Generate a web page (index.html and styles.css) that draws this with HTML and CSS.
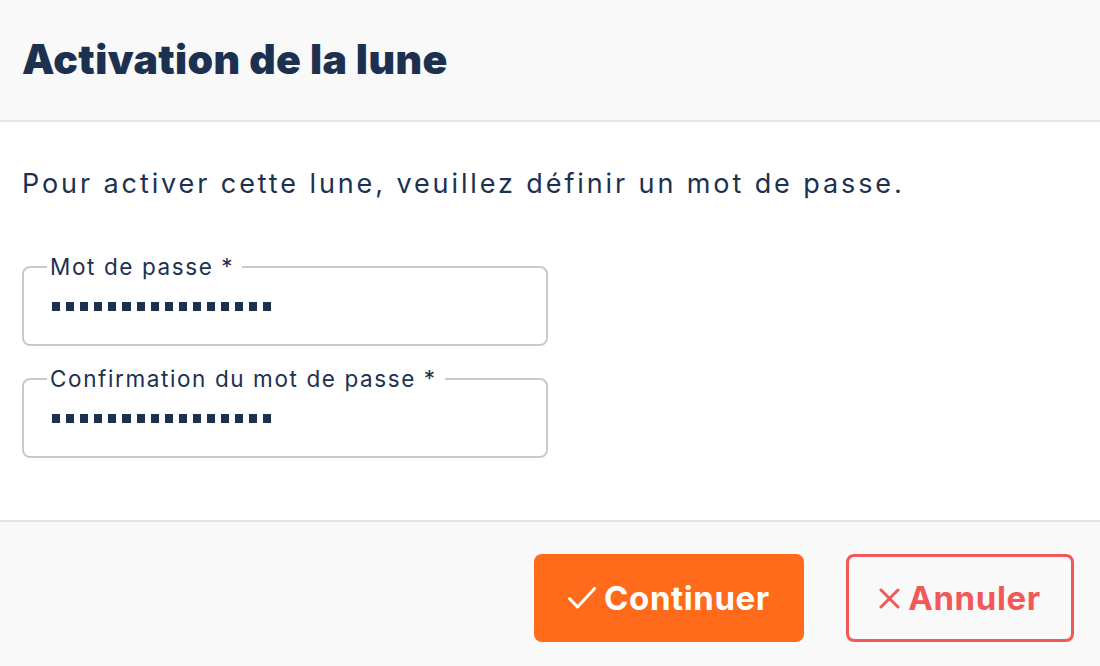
FILE: index.html
```html
<!DOCTYPE html>
<html lang="fr">
<head>
<meta charset="utf-8">
<title>Activation de la lune</title>
<link rel="stylesheet" href="styles.css">
</head>
<body>
<div class="modal">
  <header class="modal-header">
    <h1 class="modal-title">Activation de la lune</h1>
  </header>
  <main class="modal-body">
    <p class="intro">Pour activer cette lune, veuillez définir un mot de passe.</p>
    <fieldset class="field">
      <legend class="field-label">Mot de passe *</legend>
      <div class="dots" aria-label="mot de passe masqué"></div>
    </fieldset>
    <fieldset class="field">
      <legend class="field-label">Confirmation du mot de passe *</legend>
      <div class="dots" aria-label="mot de passe masqué"></div>
    </fieldset>
  </main>
  <footer class="modal-footer">
    <button class="btn btn-primary" type="button">
      <svg class="icon" viewBox="0 0 28 22" width="28" height="22"><path d="M1.5 11.5l8 8.5L26.5 1.5" fill="none" stroke="currentColor" stroke-width="3" stroke-linecap="round" stroke-linejoin="round"/></svg>
      <span>Continuer</span>
    </button>
    <button class="btn btn-outline" type="button">
      <svg class="icon" viewBox="0 0 21 21" width="21" height="21"><path d="M2 2l17 17M19 2L2 19" fill="none" stroke="currentColor" stroke-width="3" stroke-linecap="round"/></svg>
      <span>Annuler</span>
    </button>
  </footer>
</div>
</body>
</html>
```

FILE: styles.css
```css
* { box-sizing: border-box; }
html, body { margin: 0; padding: 0; }
body {
  width: 1100px;
  height: 666px;
  overflow: hidden;
  background: #ffffff;
  font-family: Inter, "Noto Sans", sans-serif;
  color: #1c3150;
}
.modal {
  display: flex;
  flex-direction: column;
  height: 666px;
}
.modal-header {
  height: 122px;
  flex: none;
  background: #f9f9f9;
  border-bottom: 2px solid #e1e4e8;
  display: flex;
  align-items: center;
  padding: 0 22px 2px;
}
.modal-title {
  margin: 0;
  font-size: 41px;
  font-weight: 900;
  letter-spacing: 0.4px;
  color: #1c3150;
}
.modal-body {
  flex: none;
  height: 398px;
  padding: 40px 22px 0;
  display: flex;
  flex-direction: column;
}
.intro {
  margin: 0 0 50px;
  font-size: 27px;
  line-height: 44px;
  font-weight: 400;
  letter-spacing: 2.9px;
  color: #1c3150;
}
.field {
  margin: 0 0 22px;
  width: 526px;
  height: 90px;
  border: 2px solid #c9c9c9;
  border-radius: 8px;
  padding: 0 0 0 28px;
}
.field-label {
  font-size: 22.5px;
  line-height: 22px;
  letter-spacing: 1.6px;
  padding: 0 8px 0 3px;
  margin-left: -5px;
  color: #1c3150;
}
.dots {
  margin-top: 24px;
  width: 226px;
  height: 9px;
  background: repeating-linear-gradient(90deg, #1c3150 0 8px, transparent 8px 14.1px);
}
.modal-footer {
  flex: 1;
  background: #f9f9f9;
  border-top: 2px solid #e1e4e8;
  display: flex;
  justify-content: flex-end;
  align-items: flex-start;
  gap: 42px;
  padding: 32px 26px 0 0;
}
.btn {
  height: 88px;
  border-radius: 8px;
  font-family: Inter, "Noto Sans", sans-serif;
  font-size: 33px;
  font-weight: 700;
  letter-spacing: 0.6px;
  display: flex;
  align-items: center;
  justify-content: center;
  gap: 8px;
  cursor: pointer;
  padding: 0;
}
.btn-primary {
  width: 270px;
  background: #ff6b1a;
  color: #ffffff;
  border: none;
}
.btn-outline {
  width: 228px;
  background: transparent;
  color: #f25858;
  border: 3px solid #f25858;
}
.icon { flex: none; }
```
